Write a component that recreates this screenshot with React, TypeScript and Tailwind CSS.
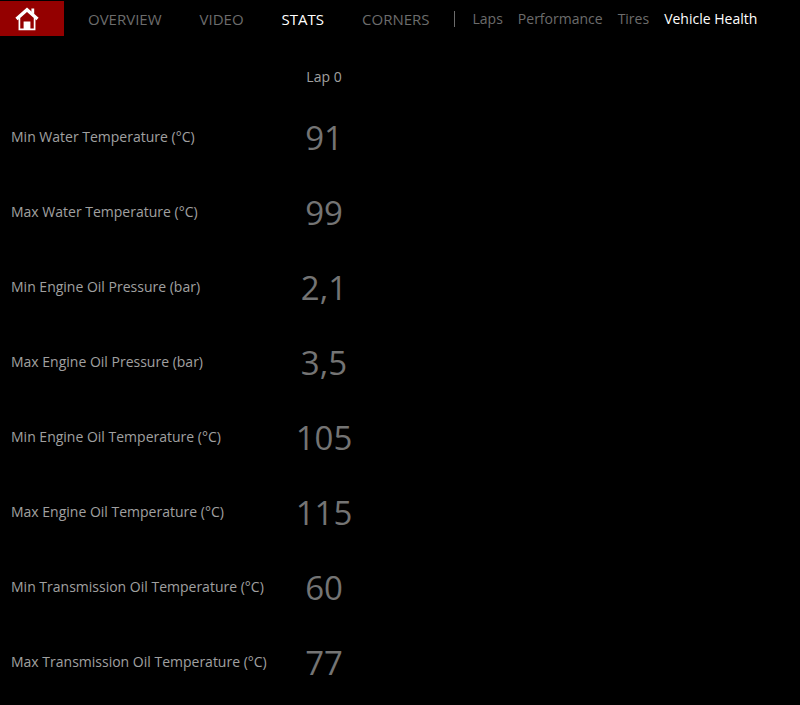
import { useState } from "react";

const sections = ["OVERVIEW", "VIDEO", "STATS", "CORNERS"];

const pages = ["Laps", "Performance", "Tires", "Vehicle Health"];

const healthRows = [
  { label: "Min Water Temperature (°C)", value: "91" },
  { label: "Max Water Temperature (°C)", value: "99" },
  { label: "Min Engine Oil Pressure (bar)", value: "2,1" },
  { label: "Max Engine Oil Pressure (bar)", value: "3,5" },
  { label: "Min Engine Oil Temperature (°C)", value: "105" },
  { label: "Max Engine Oil Temperature (°C)", value: "115" },
  { label: "Min Transmission Oil Temperature (°C)", value: "60" },
  { label: "Max Transmission Oil Temperature (°C)", value: "77" },
];

const HomeIcon = () => (
  <svg viewBox="0 0 24 24" className="h-6 w-6" fill="none" aria-hidden="true">
    <path d="M4.4 11v11.3h15.2V11" stroke="#fff" strokeWidth="1.7" />
    <path d="M8.6 22v-7.5h6.8V22z" fill="#fff" />
    <path d="M16.4 1.6h2.8v6l-2.8-2.6z" fill="#fff" />
    <path d="M1.5 12 12 2.7 22.5 12" stroke="#fff" strokeWidth="3.4" />
  </svg>
);

const NavButton = ({
  name,
  active,
  onClick,
}: {
  name: string;
  active: boolean;
  onClick: () => void;
}) => (
  <button
    onClick={onClick}
    className={`whitespace-nowrap ${
      active ? "text-white" : "text-[#6c6c6c] hover:text-[#a0a0a0]"
    }`}
  >
    {name}
  </button>
);

const App = () => {
  const [section, setSection] = useState("STATS");
  const [page, setPage] = useState("Vehicle Health");

  return (
    <div className="min-h-screen bg-black pt-px font-['Open_Sans','Noto_Sans',sans-serif] text-[14px] leading-5 text-[#a0a0a0]">
      <nav className="flex h-[35px] items-center">
        <button
          aria-label="Home"
          className="flex h-full w-16 shrink-0 items-center justify-center bg-[#940000] pr-[10px]"
        >
          <HomeIcon />
        </button>

        {/* Main sections */}
        <div className="ml-6 flex gap-[38px] text-[15px]">
          {sections.map((name) => (
            <NavButton
              key={name}
              name={name}
              active={name === section}
              onClick={() => setSection(name)}
            />
          ))}
        </div>

        <div className="mr-[18px] ml-6 h-4 w-px bg-[#6c6c6c]"></div>

        {/* Pages of the open section */}
        <div className="flex gap-[15px]">
          {pages.map((name) => (
            <NavButton
              key={name}
              name={name}
              active={name === page}
              onClick={() => setPage(name)}
            />
          ))}
        </div>
      </nav>

      <table className="w-full table-fixed border-collapse">
        <thead>
          <tr className="h-16">
            <td className="w-[274px]"></td>
            <th scope="col" className="w-[100px] pt-[18px] font-normal">
              Lap 0
            </th>
            <td></td>
          </tr>
        </thead>
        <tbody>
          {healthRows.map((row) => (
            <tr key={row.label} className="h-[75px]">
              <th
                scope="row"
                className="pb-px pl-[11px] text-left font-normal whitespace-nowrap"
              >
                {row.label}
              </th>
              <td className="pt-px text-center text-[33px] leading-10 text-[#747474]">
                {row.value}
              </td>
              <td></td>
            </tr>
          ))}
        </tbody>
      </table>
    </div>
  );
};

export default App;
